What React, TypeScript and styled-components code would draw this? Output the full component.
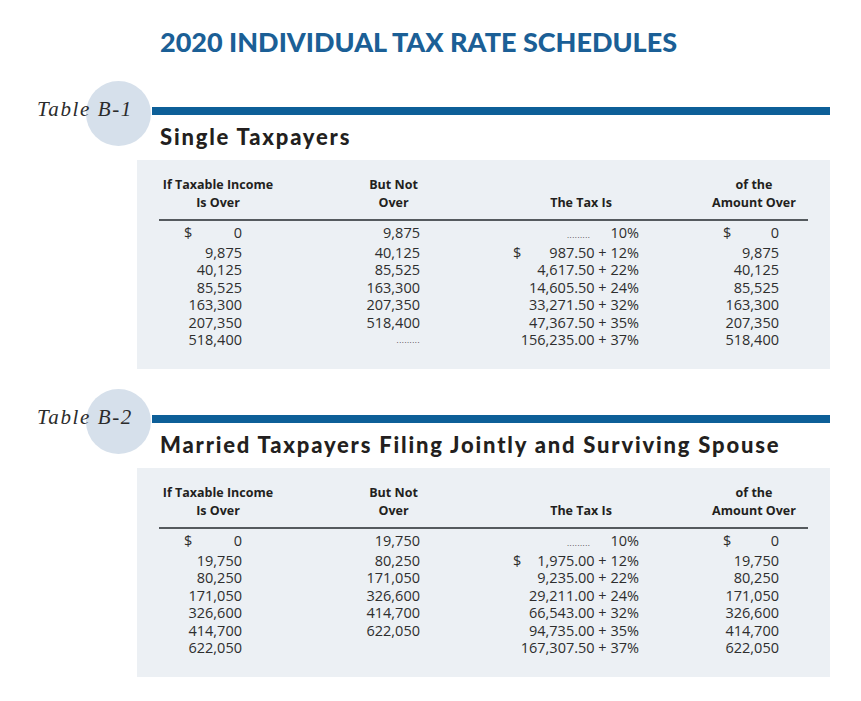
import React from 'react'
import styled, { createGlobalStyle } from 'styled-components'

const GlobalStyle = createGlobalStyle`
  body {
    margin: 0;
    background: #ffffff;
  }
`

const Page = styled.div`
  width: 861px;
  height: 701px;
  box-sizing: border-box;
  padding-top: 26px;
  font-family: 'Open Sans', sans-serif;
  color: #2e2e2e;
  overflow: hidden;
`

const Title = styled.h1`
  margin: 0 0 0 160px;
  font-family: Lato, sans-serif;
  font-weight: 900;
  font-size: 27px;
  line-height: 32px;
  color: #1b5f96;
`

const Section = styled.section<{ $top: number }>`
  margin-top: ${({ $top }) => $top}px;
`

const SectionHead = styled.div`
  display: flex;
  align-items: flex-end;
  padding-right: 31px;
`

const Tag = styled.div`
  position: relative;
  width: 152px;
  height: 26px;
  flex-shrink: 0;

  &::before {
    content: '';
    position: absolute;
    left: 86px;
    top: -15px;
    width: 65px;
    height: 65px;
    border-radius: 50%;
    background: #d6e0eb;
  }
`

const TagText = styled.span`
  position: relative;
  display: block;
  padding-left: 37px;
  font-family: 'Liberation Serif', serif;
  font-style: italic;
  font-size: 21px;
  line-height: 26px;
  letter-spacing: 1.6px;
  color: #2b2b2b;
`

const Bar = styled.div`
  flex: 1;
  height: 8px;
  margin-bottom: 7px;
  background: #0d5f98;
`

const Heading = styled.h2`
  position: relative;
  margin: 1px 0 0 160px;
  font-family: Lato, sans-serif;
  font-weight: 900;
  font-size: 22px;
  line-height: 28px;
  letter-spacing: 1.8px;
  color: #231f20;
`

const Panel = styled.div`
  margin: 9px 31px 0 137px;
  height: 209px;
  box-sizing: border-box;
  padding: 16px 0 0 22px;
  background: #ecf0f4;
`

const Grid = styled.div`
  display: grid;
  width: 649px;
  grid-template-columns: 118px 233px 142px 156px;
`

const HeadRow = styled.div`
  display: contents;
`

const HeadCell = styled.div<{ $indent?: number }>`
  align-self: end;
  padding: 0 0 7px ${({ $indent }) => $indent ?? 0}px;
  border-bottom: 2px solid #555a5e;
  text-align: center;
  font-weight: 700;
  font-size: 12.5px;
  line-height: 18px;
  color: #231f20;
`

const Cell = styled.div<{ $pl: number; $pr: number; $first?: boolean }>`
  display: flex;
  justify-content: flex-end;
  align-items: baseline;
  padding: ${({ $first }) => ($first ? 3 : 0)}px ${({ $pr }) => $pr}px 0 ${({ $pl }) => $pl}px;
  font-size: 14.5px;
  line-height: 17.5px;
  white-space: pre;
`

const Dollar = styled.span`
  margin-right: auto;
`

const Leader = styled.span<{ $gap?: number }>`
  margin-right: ${({ $gap }) => $gap ?? 0}px;
  font-size: 8px;
  letter-spacing: 0.5px;
  color: #444;
`

type Row = { over: string; notOver: string | null; tax: string | null; rate: string; amount: string }

const single: Row[] = [
  { over: '0', notOver: '9,875', tax: null, rate: '10%', amount: '0' },
  { over: '9,875', notOver: '40,125', tax: '987.50', rate: '12%', amount: '9,875' },
  { over: '40,125', notOver: '85,525', tax: '4,617.50', rate: '22%', amount: '40,125' },
  { over: '85,525', notOver: '163,300', tax: '14,605.50', rate: '24%', amount: '85,525' },
  { over: '163,300', notOver: '207,350', tax: '33,271.50', rate: '32%', amount: '163,300' },
  { over: '207,350', notOver: '518,400', tax: '47,367.50', rate: '35%', amount: '207,350' },
  { over: '518,400', notOver: '', tax: '156,235.00', rate: '37%', amount: '518,400' },
]

const married: Row[] = [
  { over: '0', notOver: '19,750', tax: null, rate: '10%', amount: '0' },
  { over: '19,750', notOver: '80,250', tax: '1,975.00', rate: '12%', amount: '19,750' },
  { over: '80,250', notOver: '171,050', tax: '9,235.00', rate: '22%', amount: '80,250' },
  { over: '171,050', notOver: '326,600', tax: '29,211.00', rate: '24%', amount: '171,050' },
  { over: '326,600', notOver: '414,700', tax: '66,543.00', rate: '32%', amount: '326,600' },
  { over: '414,700', notOver: '622,050', tax: '94,735.00', rate: '35%', amount: '414,700' },
  { over: '622,050', notOver: null, tax: '167,307.50', rate: '37%', amount: '622,050' },
]

function Schedule({ rows }: { rows: Row[] }) {
  return (
    <Grid>
      <HeadRow>
        <HeadCell>If Taxable Income<br />Is Over</HeadCell>
        <HeadCell>But Not<br />Over</HeadCell>
        <HeadCell>The Tax Is</HeadCell>
        <HeadCell $indent={48}>of the<br />Amount Over</HeadCell>
      </HeadRow>
      {rows.map((r, i) => (
        <React.Fragment key={i}>
          <Cell $pl={25} $pr={35} $first={i === 0}>
            {i === 0 && <Dollar>$</Dollar>}
            {r.over}
          </Cell>
          <Cell $pl={0} $pr={90} $first={i === 0}>
            {r.notOver === '' ? <Leader>.........</Leader> : r.notOver}
          </Cell>
          <Cell $pl={3} $pr={13} $first={i === 0}>
            {i === 1 && <Dollar>$</Dollar>}
            {r.tax === null ? (
              <>
                <Leader $gap={20}>.........</Leader>
                {r.rate}
              </>
            ) : (
              `${r.tax} + ${r.rate}`
            )}
          </Cell>
          <Cell $pl={71} $pr={29} $first={i === 0}>
            {i === 0 && <Dollar>$</Dollar>}
            {r.amount}
          </Cell>
        </React.Fragment>
      ))}
    </Grid>
  )
}

export default function App() {
  return (
    <Page>
      <GlobalStyle />
      <Title>2020 INDIVIDUAL TAX RATE SCHEDULES</Title>
      <Section $top={38}>
        <SectionHead>
          <Tag>
            <TagText>Table B-1</TagText>
          </Tag>
          <Bar />
        </SectionHead>
        <Heading>Single Taxpayers</Heading>
        <Panel>
          <Schedule rows={single} />
        </Panel>
      </Section>
      <Section $top={35}>
        <SectionHead>
          <Tag>
            <TagText>Table B-2</TagText>
          </Tag>
          <Bar />
        </SectionHead>
        <Heading>Married Taxpayers Filing Jointly and Surviving Spouse</Heading>
        <Panel>
          <Schedule rows={married} />
        </Panel>
      </Section>
    </Page>
  )
}
